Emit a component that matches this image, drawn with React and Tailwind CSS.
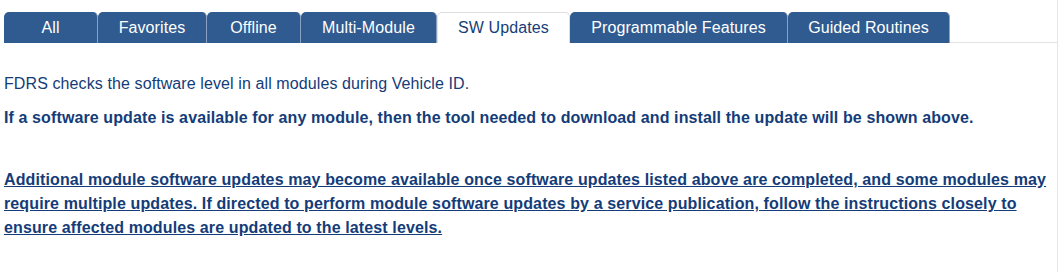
export default function App() {
  const tabs = [
    { label: "All", w: 94 },
    { label: "Favorites", w: 109 },
    { label: "Offline", w: 94 },
    { label: "Multi-Module", w: 136 },
    { label: "SW Updates", w: 133, active: true },
    { label: "Programmable Features", w: 218 },
    { label: "Guided Routines", w: 162 },
  ];
  return (
    <div
      className="w-[1058px] h-[272px] bg-white border-r border-[#e6e6e6] overflow-hidden"
      style={{ fontFamily: '"Liberation Sans", Arial, sans-serif' }}
    >
      <div className="flex pl-[4px] pt-[12px] h-[43px]">
        {tabs.map((t) =>
          t.active ? (
            <div
              key={t.label}
              style={{ width: t.w }}
              className="h-[31px] flex items-center justify-center bg-white border border-b-0 border-[#dedede] rounded-t-[5px] text-[16px] tracking-[0.1px] text-[#163e78]"
            >
              {t.label}
            </div>
          ) : (
            <div
              key={t.label}
              style={{ width: t.w }}
              className="h-[31px] flex items-center justify-center bg-[#2f5b90] border-r border-[#8aa2c2] rounded-t-[5px] text-[16px] tracking-[0.1px] text-white"
            >
              {t.label}
            </div>
          )
        )}
        <div className="flex-1 border-b border-[#e3e3e3] h-[31px]" />
      </div>
      <div className="px-[4px] text-[16px] leading-[24px] tracking-[0.1px] text-[#143c78]">
        <p className="mt-[29px]">FDRS checks the software level in all modules during Vehicle ID.</p>
        <p className="mt-[10px] font-bold tracking-[0.11px]">
          If a software update is available for any module, then the tool needed to download and install the update will be shown above.
        </p>
        <p className="mt-[38px] font-bold underline tracking-[0.12px] pr-[6px]">
          Additional module software updates may become available once software updates listed above are completed, and some modules may require multiple updates. If directed to perform module software updates by a service publication, follow the instructions closely to ensure affected modules are updated to the latest levels.
        </p>
      </div>
    </div>
  );
}
